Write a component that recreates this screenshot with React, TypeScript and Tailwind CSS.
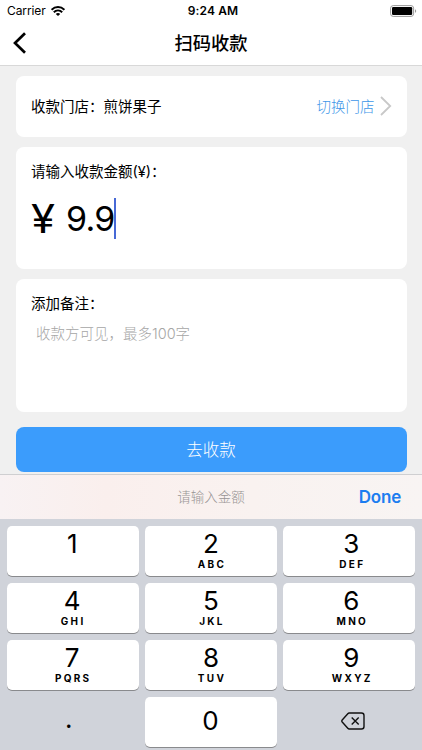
const keys = [
  { digit: '1', letters: '' },
  { digit: '2', letters: 'ABC' },
  { digit: '3', letters: 'DEF' },
  { digit: '4', letters: 'GHI' },
  { digit: '5', letters: 'JKL' },
  { digit: '6', letters: 'MNO' },
  { digit: '7', letters: 'PQRS' },
  { digit: '8', letters: 'TUV' },
  { digit: '9', letters: 'WXYZ' },
];

function StatusBar() {
  return (
    <div className="flex h-[22px] items-center pl-[7px] pr-[5px] text-[12px] leading-[22px]">
      <div className="flex flex-1 items-center gap-[5px]">
        <span className="tracking-[-0.1px]">Carrier</span>
        <svg width="14" height="10" viewBox="0 0 14 10" fill="none" stroke="#000" strokeWidth="2">
          <path d="M0.6 3.8C4.2 0.2 9.8 0.2 13.4 3.8" />
          <path d="M2.8 6.2C5.2 3.9 8.8 3.9 11.2 6.2" />
          <path d="M4.8 7.9C6 6.8 8 6.8 9.2 7.9L7 10Z" fill="#000" stroke="none" />
        </svg>
      </div>
      <span className="pl-[2px] font-semibold tracking-[0.1px]">9:24 AM</span>
      <div className="flex flex-1 justify-end">
        <svg className="-mt-px" width="27" height="12" viewBox="0 0 27 12">
          <rect x="0.6" y="0.6" width="23" height="10.8" rx="2.6" fill="#fff" stroke="#999" strokeWidth="1" />
          <rect x="2" y="2" width="20.2" height="8" rx="1.2" fill="#000" />
          <path d="M25 4.2C26.6 4.7 26.6 7.3 25 7.8Z" fill="#999" />
        </svg>
      </div>
    </div>
  );
}

function Key({ digit, letters }: { digit: string; letters: string }) {
  return (
    <button className="flex h-[50px] flex-col items-center rounded-[5px] bg-white pt-[2px] shadow-[0_1px_0_#898a8d] nth-[3n]:pl-[4px] nth-[3n+1]:pr-px">
      <span className="h-[31px] text-[26px] leading-[31px]">{digit}</span>
      <span className="pl-[2px] text-[10px] font-bold leading-[10px] tracking-[2.3px]">{letters}</span>
    </button>
  );
}

export default function App() {
  return (
    <div className="flex h-[750px] w-[422px] flex-col overflow-hidden bg-[#f0f0f0] font-['Inter','Noto_Sans_CJK_SC',sans-serif] text-black">
      <header className="h-[66px] shrink-0 border-b border-[#d8d8d8] bg-white">
        <StatusBar />
        <div className="grid h-[41px] grid-cols-[60px_1fr_60px] items-center">
          <svg className="ml-[12px] mt-px" width="16" height="22" viewBox="0 0 16 22" fill="none" stroke="#000" strokeWidth="2.7">
            <path d="M13 1.2L3 11L13 20.8" />
          </svg>
          <h1 className="text-center text-[18.3px] font-medium leading-[26px]">扫码收款</h1>
        </div>
      </header>

      <main className="flex h-[408px] shrink-0 flex-col px-[15.5px] pt-[10px] text-[14.5px]">
        <section className="flex h-[61px] shrink-0 items-center justify-between rounded-[8px] bg-white pl-[15.5px] pr-[15px]">
          <span>收款门店：煎饼果子</span>
          <span className="flex items-center gap-[5px] font-light text-[#3d96e8]">
            切换门店
            <svg className="-mt-px" width="12" height="20" viewBox="0 0 12 20" fill="none" stroke="#c8c8c8" strokeWidth="1.8">
              <path d="M1 1L10.2 10L1 19" />
            </svg>
          </span>
        </section>

        <section className="mt-[10px] h-[122px] shrink-0 rounded-[8px] bg-white px-[15.5px] pt-[14px]">
          <p className="leading-[22px]">请输入收款金额(¥)：</p>
          <div className="mt-[14px] flex h-[42px] items-center">
            <span className="w-[35px] pt-[2px] text-[39px] leading-[42px]">
              <span className="inline-block origin-left scale-x-[1.12]">¥</span>
            </span>
            <span className="w-[47.5px] pt-px text-[34px] leading-[42px] tracking-[-0.8px]">9.9</span>
            <span className="h-[41px] w-[2px] bg-[#4769d6]" />
          </div>
        </section>

        <section className="mt-[10px] h-[133px] shrink-0 rounded-[8px] bg-white px-[15.5px] pt-[14px]">
          <p className="leading-[22px]">添加备注：</p>
          <p className="mt-[8px] pl-[5px] font-light leading-[22px] text-[#a6a6a6]">收款方可见，最多100字</p>
        </section>

        <button className="mt-[15px] h-[45px] shrink-0 rounded-[8px] bg-[#3b9cfc] pt-px text-[16.5px] font-light text-white">去收款</button>
      </main>

      <div className="grid h-[45px] shrink-0 grid-cols-[1fr_auto_1fr] items-center border-t border-[#cfcfd1] bg-[linear-gradient(90deg,#f8f2f3_0%,#faefed_25%,#f9f2f0_60%,#f8f4f3_100%)]">
        <span className="col-start-2 pt-px text-[13.5px] font-light text-[#989494]">请输入金额</span>
        <button className="mr-[21px] justify-self-end pt-[2px] text-[17px] font-semibold tracking-[-0.2px] text-[#1c7df0]">Done</button>
      </div>

      <div className="grid h-[231px] shrink-0 grid-cols-3 content-start gap-x-[6px] gap-y-[7px] bg-[#d0d3da] px-[6.5px] pt-[7px]">
        {keys.map((key) => (
          <Key key={key.digit} {...key} />
        ))}
        <button className="flex h-[50px] items-center justify-center pb-[8px] pr-[8px] text-[26px]">.</button>
        <button className="flex h-[50px] items-center justify-center rounded-[5px] bg-white pb-[4px] pr-px text-[26px] shadow-[0_1px_0_#898a8d]">0</button>
        <button className="flex h-[50px] items-center justify-center">
          <svg className="mt-[-2px] ml-[7px]" width="24" height="18" viewBox="0 0 24 18" fill="none" stroke="#111" strokeWidth="1.4" strokeLinejoin="round">
            <path d="M8.2 1H20.5Q23 1 23 3.5V14.5Q23 17 20.5 17H8.2Q7.4 17 6.8 16.3L1.2 10Q0.4 9 1.2 8L6.8 1.7Q7.4 1 8.2 1Z" />
            <path d="M10.7 5.5L17.7 12.5M17.7 5.5L10.7 12.5" />
          </svg>
        </button>
      </div>
    </div>
  );
}
